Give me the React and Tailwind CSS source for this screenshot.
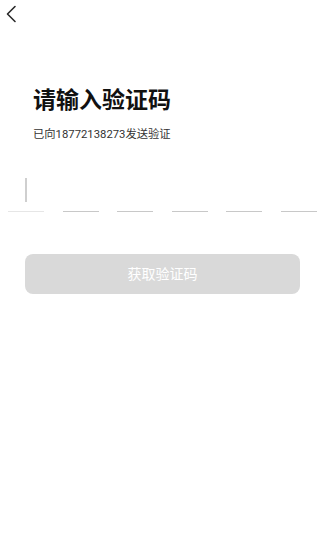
export default function App() {
    const cells = [0, 1, 2, 3, 4, 5];

    return (
        <div
            className="w-[320px] h-[552px] bg-white overflow-hidden"
            style={{ fontFamily: 'Roboto, "Noto Sans CJK SC", sans-serif' }}
        >
            {/* Back */}
            <div className="h-[28px] pl-[5px] pt-[5px]">
                <svg width="12" height="18" viewBox="0 0 12 18" fill="none">
                    <path d="M10 1.5 L2.5 9 L10 16.5" stroke="#2a2a2a" strokeWidth="1.6" strokeLinecap="round" strokeLinejoin="round" />
                </svg>
            </div>

            {/* Title */}
            <div className="pl-[33px] pt-[56px]">
                <h1 className="text-[23px] leading-[34px] font-bold text-[#111]">请输入验证码</h1>
                <p className="mt-[9px] text-[11.3px] leading-[16px] text-[#333]">已向18772138273发送验证</p>
            </div>

            {/* Code cells */}
            <div className="flex gap-[18.6px] pl-[8px] mt-[35px]">
                {cells.map((i) => (
                    <div
                        key={i}
                        className={`w-[36px] h-[34px] flex items-start justify-center border-b ${i === 0 ? "border-[#e6e6e6]" : "border-[#c8c8c8]"
                            }`}
                    >
                        {i === 0 && <div className="w-[1.5px] h-[24px] bg-[#cfcfcf]" />}
                    </div>
                ))}
            </div>

            {/* Button */}
            <div className="px-[25px] pr-[20px] mt-[42px]">
                <button className="w-full h-[40px] rounded-[8px] bg-[#d9d9d9] text-white text-[14px]">
                    获取验证码
                </button>
            </div>
        </div>
    );
}
